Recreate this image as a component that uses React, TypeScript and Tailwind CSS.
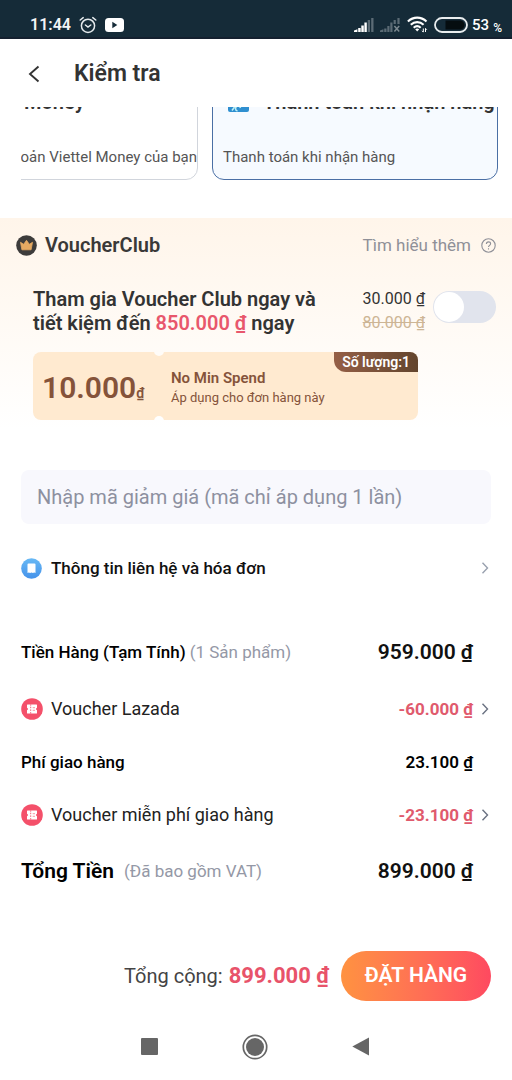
import { useState } from "react";
import type { ReactNode } from "react";

function StatusBar() {
  return (
    <div className="flex h-[39px] items-center justify-between border-b-2 border-[#14202f] bg-[#152b38] pt-3 pr-2.5 pl-[30px] text-white">
      <div className="flex items-center gap-2">
        <span className="text-base leading-5 font-semibold text-gray-100">11:44</span>
        <svg className="h-[18px] w-[18px]" viewBox="0 0 18 18" fill="none" stroke="#e5eaed" strokeWidth="1.5" strokeLinecap="round">
          <circle cx="9" cy="9.8" r="6.6" />
          <path d="M1.2 4 4.2 1.6M16.8 4l-3-2.4M6.4 9l2.6 2 2.8-2" />
        </svg>
        <svg className="h-[14px] w-[19px]" viewBox="0 0 19 14">
          <rect width="19" height="14" rx="3.5" fill="#fff" />
          <path d="M7.3 3.8v6.4l5-3.2z" fill="#152b38" />
        </svg>
      </div>
      <div className="flex items-center">
        <svg className="h-[15px] w-[20px]" viewBox="0 0 20 15">
          <path d="M0 15v-1.6l3.4-1.2V15zM4.200 11h2.500v4H4.200zM7.300 8.500h2.500V15H7.300zM10.400 5.500h2.400V15h-2.400z" fill="#fff" />
          <path d="M13.7 3H16v12h-2.3zM17.2 1h2.3v14h-2.3z" fill="#5b6b75" />
        </svg>
        <svg className="ml-1.5 h-[15px] w-[21px]" viewBox="0 0 21 15">
          <path d="M0 15v-1.600l3.400-1.200V15zM4.200 11.500h2.300V15H4.200zM7.300 9h2.200v6H7.300zM10.300 5.500h2.200V15h-2.200zM13.600 3h2.200v4h-2.200zM17.400 1h2.200v6h-2.200z" fill="#5b6b75" />
          <path d="m14.400 9 4.800 5.500m0-5.500-4.800 5.500" stroke="#7c8990" strokeWidth="1.5" />
        </svg>
        <svg className="ml-1.5 h-[17px] w-[21px]" viewBox="0 0 21 17" fill="none" stroke="#fff" strokeWidth="2.1">
          <path d="M.9 5.500c5.400-5.200 13.200-5.200 18.600 0M3.800 8.700c3.700-3.500 9-3.500 12.800 0M6.700 11.700c2-1.900 4.900-1.900 7 0" />
          <path d="m10.200 15.500-2-2.300c1.200-1 2.800-1 4 0z" fill="#fff" stroke="none" />
          <path d="M16.300 12.500v3.600l-1.300-1.300M18.500 16v-3.600l1.300 1.300" strokeWidth="1" />
        </svg>
        <svg className="ml-1.5 h-4 w-[34px]" viewBox="0 0 34 16">
          <rect x="1" y="1" width="32" height="14" rx="7" fill="none" stroke="#e9edef" strokeWidth="1.8" />
          <path d="M11.500 3.500H26a4.500 4.500 0 0 1 0 9H11.500z" fill="#050d10" />
        </svg>
        <span className="ml-1 text-[15px] leading-5 font-medium">53</span>
        <span className="mt-1.5 ml-1 text-xs leading-4 font-medium">%</span>
      </div>
    </div>
  );
}

function Chevron({ className }: { className: string }) {
  return (
    <svg className={className} viewBox="0 0 8 12" fill="none" stroke="currentColor" strokeWidth="1.4">
      <path d="m1.500.8 5 5.200-5 5.200" />
    </svg>
  );
}

function TicketIcon() {
  return (
    <svg className="h-[22px] w-[22px] shrink-0" viewBox="0 0 22 22">
      <circle cx="11" cy="11" r="10.8" fill="#f4506a" />
      <path d="M6.500 6.500h9q.5 0 .5.500v2.700l-.8.600v1.400l.8.600V15q0 .5-.5.500h-9Q6 15.500 6 15v-2.700l.8-.6v-1.400L6 9.700V7q0-.5.500-.5z" fill="#fff" />
      <path d="M9.700 6.500v1.200m0 1v1.500m0 1.200v1.500m0 1.200v1.400" stroke="#f4506a" strokeWidth=".9" />
      <path d="M11.700 9.700h2.300m-2.300 2.600h2.300" stroke="#f4506a" strokeWidth=".6" />
    </svg>
  );
}

function PaymentMethods() {
  return (
    <section className="ml-[21px] flex h-[73px] items-end justify-end gap-3.5 overflow-hidden pr-3.5">
      <button className="flex h-28 w-[230px] shrink-0 flex-col items-end justify-between rounded-xl border border-gray-300 pt-[21px] pb-2.5 text-right whitespace-nowrap">
        <span className="w-[173px] text-left text-xl leading-6 font-semibold text-[#333]">Money</span>
        <span className="text-[15px] leading-6 text-[#555]">Tài khoản Viettel Money của bạn</span>
      </button>
      <button className="flex h-28 w-[286px] shrink-0 flex-col justify-between rounded-xl border border-[#4a6fa5] bg-[#f6faff] px-2.5 pt-[21px] pb-2.5 text-left whitespace-nowrap">
        <span className="flex items-center gap-3.5 pl-[5px] text-xl leading-6 font-semibold text-[#333]">
          <svg className="h-5 w-[21px] shrink-0" viewBox="0 0 21 20">
            <rect width="21" height="20" rx="2" fill="#2f8fd0" />
            <path d="M4 18.500 6.500 15m3 4a2.500 2.500 0 1 1 3-3" stroke="#bdf0f6" strokeWidth="1.5" fill="none" />
          </svg>
          Thanh toán khi nhận hàng
        </span>
        <span className="text-[15px] leading-6 text-[#555]">Thanh toán khi nhận hàng</span>
      </button>
    </section>
  );
}

function VoucherClub() {
  const [joined, setJoined] = useState(false);

  return (
    <section className="mt-[38px] bg-linear-to-b from-[#fff5ea] to-white pt-[13px] pr-4 pb-2.5 pl-4">
      <div className="flex h-7 items-center">
        <svg className="h-[21px] w-[21px]" viewBox="0 0 21 21">
          <circle cx="10.5" cy="10.5" r="10.3" fill="#3d3c3b" />
          <path d="m4.500 7.300 3.200 2 2.800-4 2.800 4 3.200-2-1.400 7.500H5.900z" fill="#e6aa62" stroke="#e6aa62" strokeWidth=".8" strokeLinejoin="round" />
        </svg>
        <h2 className="ml-2 text-xl leading-7 font-semibold text-[#3a3938]">VoucherClub</h2>
        <a href="#voucher-club" className="ml-auto flex items-center gap-2.5 text-[17px] leading-6 text-[#8f9098]">
          Tìm hiểu thêm
          <svg className="h-[15px] w-[15px]" viewBox="0 0 15 15" fill="none" stroke="currentColor" strokeWidth="1.1">
            <circle cx="7.5" cy="7.5" r="6.7" />
            <path d="M5.400 6c0-2.900 4.200-2.700 4.200-.2 0 1.500-2.100 1.600-2.100 3.200M7.500 10.200v1.300" />
          </svg>
        </a>
      </div>

      <div className="mt-7 flex items-start pl-[17px]">
        <p className="text-xl leading-6 font-semibold whitespace-nowrap text-[#333]">
          Tham gia Voucher Club ngay và
          <br />
          tiết kiệm đến <span className="text-[#e8576c]">850.000 ₫</span> ngay
        </p>
        <div className="ml-auto flex items-start gap-2">
          <p className="flex flex-col text-base leading-6 whitespace-nowrap text-[#333]">
            <span>30.000 ₫</span>
            <s className="text-[#cdb595]">80.000 ₫</s>
          </p>
          <input
            type="checkbox"
            aria-label="Tham gia Voucher Club"
            checked={joined}
            onChange={(e) => setJoined(e.target.checked)}
            className="mt-1 flex h-8 w-[63px] appearance-none items-center rounded-full bg-[#e1e4ed] px-px before:h-[30px] before:w-[30px] before:rounded-full before:bg-white checked:justify-end checked:bg-[#f4506a]"
          />
        </div>
      </div>

      <div className="relative mt-[17px] mr-[78px] ml-[17px] flex h-[68px] items-center overflow-hidden rounded-lg bg-[#ffead0] pt-1 text-[#85533a]">
        <p className="w-[138px] pl-[9px] text-3xl leading-9 font-semibold whitespace-nowrap">
          10.000<span className="text-sm">₫</span>
        </p>
        <div>
          <p className="text-[15px] leading-5 font-semibold">No Min Spend</p>
          <p className="text-[13px] leading-5">Áp dụng cho đơn hàng này</p>
        </div>
        <span className="absolute top-0 right-0 rounded-bl-xl bg-linear-to-r from-[#955f46] to-[#63452e] px-2 text-sm leading-5 font-semibold text-white">
          Số lượng:1
        </span>
        <i className="absolute -top-1.5 left-[121px] h-2.5 w-2.5 rounded-full bg-[#fffcf8]" />
        <i className="absolute -bottom-1.5 left-[121px] h-2.5 w-2.5 rounded-full bg-white" />
      </div>
    </section>
  );
}

type RowProps = { label: ReactNode; note?: string; amount: string; total?: boolean };

function PriceRow({ label, note, amount, total }: RowProps) {
  return (
    <div className={total ? "flex h-[60px] items-center pr-[18px]" : "flex h-[53px] items-center pr-[18px]"}>
      <span className="font-medium text-black">{label}</span>
      {note && <span className="ml-1 text-[#9498a6]">{note}</span>}
      <span className={total ? "ml-auto text-[21px] leading-7 font-semibold text-[#111]" : "ml-auto font-semibold text-black"}>{amount}</span>
    </div>
  );
}

function VoucherRow({ label, amount }: { label: string; amount: string }) {
  return (
    <button className="flex h-[53px] w-full items-center pr-0.5 text-left">
      <TicketIcon />
      <span className="ml-2 text-lg leading-6 text-[#222]">{label}</span>
      <span className="ml-auto font-bold text-[#e05a6d]">{amount}</span>
      <Chevron className="ml-2 h-3 w-2 text-gray-500" />
    </button>
  );
}

export default function App() {
  return (
    <div className="flex min-h-screen flex-col bg-white font-[Roboto,'Noto_Sans',sans-serif]">
      <StatusBar />
      <header className="flex h-[68px] items-center pt-0.5 pl-7">
        <button aria-label="Quay lại">
          <svg className="h-[18px] w-3" viewBox="0 0 12 18" fill="none" stroke="#333" strokeWidth="1.9">
            <path d="M10.500 1.500 2 9l8.500 7.500" />
          </svg>
        </button>
        <h1 className="ml-[34px] text-[23px] leading-8 font-semibold text-[#333]">Kiểm tra</h1>
      </header>

      <main className="flex-1">
        <PaymentMethods />
        <VoucherClub />

        <div className="mx-[21px] mt-10">
          <input
            type="text"
            aria-label="Mã giảm giá"
            placeholder="Nhập mã giảm giá (mã chỉ áp dụng 1 lần)"
            className="block h-[54px] w-full rounded-lg bg-[#f8f8fd] px-4 text-xl text-[#333] placeholder:text-[#8d90a0]"
          />
          <button className="mt-4 flex h-14 w-full items-center pr-0.5 text-left text-[17px] leading-6">
            <svg className="h-[21px] w-[21px]" viewBox="0 0 21 21">
              <defs>
                <linearGradient id="invoice" x2="0" y2="1">
                  <stop stopColor="#68b9f5" />
                  <stop offset="1" stopColor="#4592ea" />
                </linearGradient>
              </defs>
              <circle cx="10.5" cy="10.5" r="10.3" fill="url(#invoice)" />
              <path d="M6.500 6.500q0-1 1-1h6q1 0 1 1V15l-1.300-.6-1.300.600-1.400-.6-1.400.600-1.300-.6-1.300.600z" fill="#fff" />
            </svg>
            <span className="ml-[9px] font-medium text-[#111]">Thông tin liên hệ và hóa đơn</span>
            <Chevron className="ml-auto h-3 w-2 text-gray-400" />
          </button>
        </div>

        <section className="mx-[21px] mt-[26px] text-[17px] leading-6">
          <PriceRow total label="Tiền Hàng (Tạm Tính)" note="(1 Sản phẩm)" amount="959.000 ₫" />
          <VoucherRow label="Voucher Lazada" amount="-60.000 ₫" />
          <PriceRow label="Phí giao hàng" amount="23.100 ₫" />
          <VoucherRow label="Voucher miễn phí giao hàng" amount="-23.100 ₫" />
          <PriceRow total label={<span className="mr-1.5 text-[21px] font-semibold">Tổng Tiền</span>} note="(Đã bao gồm VAT)" amount="899.000 ₫" />
        </section>
      </main>

      <footer>
        <div className="flex items-center justify-end pr-[21px]">
          <span className="text-xl leading-7 text-[#444]">Tổng cộng:</span>
          <strong className="ml-1.5 text-[22px] leading-7 font-bold text-[#e8536a]">899.000 ₫</strong>
          <button className="ml-3 h-[50px] w-[150px] rounded-full bg-linear-to-r from-[#ff9240] to-[#fe4960] text-[21px] font-semibold text-white">
            ĐẶT HÀNG
          </button>
        </div>
        <nav className="flex h-[79px] items-center justify-center gap-[84px] pt-3 pr-0.5 text-[#666]">
          <button aria-label="Gần đây">
            <svg className="h-[17px] w-[17px]" viewBox="0 0 17 17"><rect width="17" height="17" rx="1" fill="currentColor" /></svg>
          </button>
          <button aria-label="Trang chủ">
            <svg className="h-[26px] w-[26px]" viewBox="0 0 26 26">
              <circle cx="13" cy="13" r="11.7" fill="none" stroke="currentColor" strokeWidth="1.7" />
              <circle cx="13" cy="13" r="9" fill="currentColor" />
            </svg>
          </button>
          <button aria-label="Trở về">
            <svg className="h-[19px] w-[17px]" viewBox="0 0 17 19"><path d="M17 .5v18L.3 9.500z" fill="currentColor" /></svg>
          </button>
        </nav>
      </footer>
    </div>
  );
}
